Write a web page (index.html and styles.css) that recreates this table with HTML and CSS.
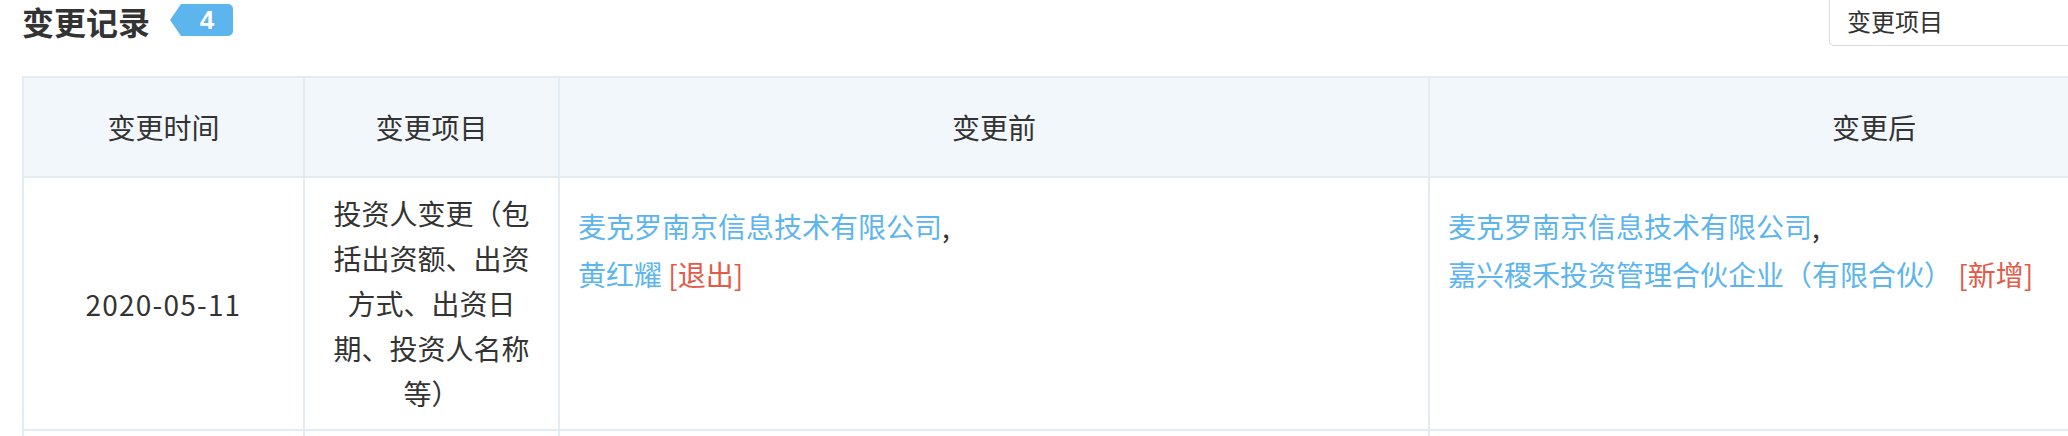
FILE: index.html
```html
<!DOCTYPE html>
<html lang="zh-CN">
<head>
    <meta charset="UTF-8">
    <meta name="viewport" content="width=device-width, initial-scale=1.0">
    <title>变更记录</title>
    <link rel="stylesheet" href="styles.css">
</head>
<body>
    <div class="page">
        <div class="title-bar">
            <div class="title">
                <h2>变更记录</h2>
                <span class="badge">4</span>
            </div>
            <div class="select">变更项目</div>
        </div>

        <table class="records">
            <colgroup>
                <col class="col-time">
                <col class="col-item">
                <col class="col-before">
                <col class="col-after">
            </colgroup>
            <thead>
                <tr>
                    <th>变更时间</th>
                    <th>变更项目</th>
                    <th>变更前</th>
                    <th>变更后</th>
                </tr>
            </thead>
            <tbody>
                <tr>
                    <td class="cell-time">2020-05-11</td>
                    <td class="cell-item">投资人变更（包括出资额、出资方式、出资日期、投资人名称等）</td>
                    <td class="cell-list">
                        <div><a class="link">麦克罗南京信息技术有限公司</a>,</div>
                        <div><a class="link">黄红耀</a> <span class="tag">[退出]</span></div>
                    </td>
                    <td class="cell-list">
                        <div><a class="link">麦克罗南京信息技术有限公司</a>,</div>
                        <div><a class="link">嘉兴稷禾投资管理合伙企业（有限合伙）</a> <span class="tag">[新增]</span></div>
                    </td>
                </tr>
                <tr class="row-empty">
                    <td></td>
                    <td></td>
                    <td></td>
                    <td></td>
                </tr>
            </tbody>
        </table>
    </div>
</body>
</html>
```

FILE: styles.css
```css
html, body {
    overflow: hidden;
}
body {
    margin: 0;
    font-family: "Noto Sans CJK SC", "Liberation Sans", sans-serif;
    color: #333;
    background: #fff;
}
.page {
    width: 2296px;
    padding: 0 22px;
}
.title-bar {
    display: flex;
    justify-content: space-between;
    align-items: center;
    height: 42px;
    margin-bottom: 34px;
}
.title {
    display: flex;
    align-items: center;
}
.title h2 {
    margin: 0;
    font-size: 32px;
    line-height: 42px;
    font-weight: bold;
    color: #333;
}
.badge {
    margin-left: 20px;
    width: 52px;
    height: 32px;
    padding-left: 11px;
    margin-top: -2px;
    box-sizing: content-box;
    display: flex;
    align-items: center;
    justify-content: center;
    background: #5db5ee;
    color: #fff;
    font-size: 26px;
    font-weight: bold;
    font-family: "Liberation Sans", sans-serif;
    border-radius: 5px;
    clip-path: polygon(11px 0, 100% 0, 100% 100%, 11px 100%, 0 50%);
}
.select {
    width: 470px;
    height: 50px;
    padding-left: 17px;
    border: 1px solid #dcdcdc;
    border-radius: 5px;
    display: flex;
    align-items: center;
    font-size: 24px;
    color: #333;
    flex-shrink: 0;
    margin-top: -2px;
}
.records {
    width: 2296px;
    border-collapse: collapse;
    table-layout: fixed;
    font-size: 28px;
}
.col-time { width: 281px; }
.col-item { width: 255px; }
.col-before { width: 870px; }
.col-after { width: 890px; }
.records th,
.records td {
    border: 2px solid #e3ebf3;
}
.records th {
    height: 98px;
    padding: 0;
    background: #f2f7fb;
    font-weight: normal;
    color: #333;
    text-align: center;
}
.records td {
    padding: 13px 20px;
    vertical-align: middle;
}
.cell-time {
    text-align: center;
    letter-spacing: 1.2px;
}
.cell-item {
    text-align: center;
    line-height: 45px;
}
.records td.cell-list {
    vertical-align: top;
    padding: 24px 18px;
    line-height: 48px;
}
.link {
    color: #5db5ee;
    text-decoration: none;
    cursor: pointer;
}
.tag {
    color: #e25a48;
}
.row-empty td {
    height: 120px;
}
```
